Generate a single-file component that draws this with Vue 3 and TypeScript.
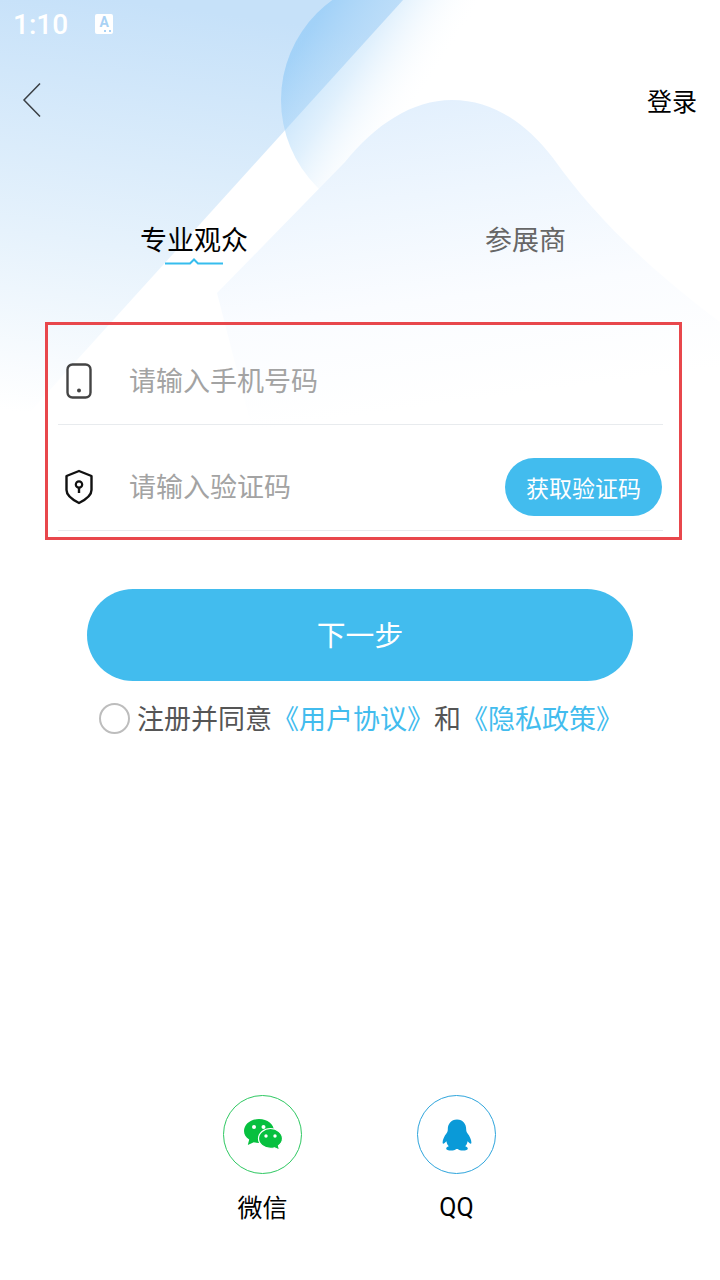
<script setup lang="ts">
import { ref } from 'vue'

const tabs = ['专业观众', '参展商']
const activeTab = ref(0)
</script>

<template>
  <div class="page">
    <svg class="page-bg" width="720" height="460" viewBox="0 0 720 460">
      <defs>
        <linearGradient id="skyFill" gradientUnits="userSpaceOnUse" x1="120" y1="0" x2="60" y2="440">
          <stop offset="0" stop-color="#c6e1f9" />
          <stop offset="0.55" stop-color="#e6f2fc" />
          <stop offset="0.95" stop-color="#ffffff" />
        </linearGradient>
        <linearGradient id="circleFill" gradientUnits="userSpaceOnUse" x1="310" y1="30" x2="420" y2="100">
          <stop offset="0" stop-color="#8cc8f7" stop-opacity="0.62" />
          <stop offset="0.45" stop-color="#a6d4f8" stop-opacity="0.34" />
          <stop offset="1" stop-color="#ffffff" stop-opacity="0" />
        </linearGradient>
        <linearGradient id="hillFill" gradientUnits="userSpaceOnUse" x1="440" y1="100" x2="480" y2="400">
          <stop offset="0" stop-color="#e3f0fd" />
          <stop offset="0.3" stop-color="#eef6fe" />
          <stop offset="0.65" stop-color="#fafcff" />
          <stop offset="1" stop-color="#ffffff" />
        </linearGradient>
      </defs>
      <polygon points="0,0 403,0 0,445" fill="url(#skyFill)" />
      <circle cx="404" cy="100" r="123" fill="url(#circleFill)" />
      <path d="M217 293 L345 162 C375 125 412 100 452 100 C492 100 525 122 553 158 C590 210 640 262 720 322 L720 460 L260 460 Z" fill="url(#hillFill)" />
    </svg>

    <div class="status-bar">
      <span class="status-time">1:10</span>
      <span class="status-badge">A</span>
    </div>

    <div class="nav-bar">
      <svg class="nav-back" width="20" height="36" viewBox="0 0 20 36">
        <path d="M18 1.5 L2 18 L18 34.5" fill="none" stroke="#3a3f44" stroke-width="1.5" />
      </svg>
      <span class="nav-login">登录</span>
    </div>

    <div class="tabs">
      <div
        v-for="(tab, i) in tabs"
        :key="tab"
        class="tab"
        :class="{ 'tab--active': activeTab === i }"
      >
        <span>{{ tab }}</span>
        <svg v-if="activeTab === i" class="tab-mark" width="58" height="8" viewBox="0 0 58 8">
          <path d="M0 6.5 H25 L29 2.5 L33 6.5 H58" fill="none" stroke="#36bdee" stroke-width="2" />
        </svg>
      </div>
    </div>

    <div class="form">
      <div class="field field--phone">
        <svg class="field-icon" width="26" height="36" viewBox="0 0 26 36">
          <rect x="1.5" y="1.5" width="23" height="33" rx="5" fill="none" stroke="#444" stroke-width="2.4" />
          <circle cx="13" cy="27.5" r="2" fill="#444" />
        </svg>
        <input class="field-input" type="text" placeholder="请输入手机号码" />
      </div>
      <div class="field field--code">
        <svg class="field-icon" width="30" height="36" viewBox="0 0 30 36">
          <path d="M15 2 L27.5 7 V21 C27.5 26 21 31 15 34 C9 31 2.5 26 2.5 21 V7 Z" fill="none" stroke="#111" stroke-width="2.4" stroke-linejoin="round" />
          <circle cx="15" cy="15.5" r="3.2" fill="none" stroke="#111" stroke-width="2.2" />
          <path d="M15 18.5 V24" stroke="#111" stroke-width="2.4" />
        </svg>
        <input class="field-input" type="text" placeholder="请输入验证码" />
        <button class="code-button" type="button">获取验证码</button>
      </div>
    </div>

    <button class="next-button" type="button">下一步</button>

    <div class="agreement">
      <span class="agreement-check"></span>
      <span class="agreement-text">注册并同意<em>《用户协议》</em>和<em>《隐私政策》</em></span>
    </div>

    <div class="social">
      <div class="social-item">
        <span class="social-circle social-circle--wechat">
          <svg width="40" height="34" viewBox="0 0 40 34">
            <path d="M16 1 C24.5 1 31 6.4 31 13 C31 19.6 24.5 25 16 25 C14 25 12.4 24.7 10.8 24.2 L4.8 27 L6.2 21.6 C2.8 19.4 1 16.4 1 13 C1 6.4 7.5 1 16 1 Z" fill="#07c03f" />
            <path d="M27.5 10.5 C34 10.5 39.5 15 39.5 20.6 C39.5 23.6 38 26 35.5 27.8 L36.5 32 L31.6 29.8 C30.4 30.2 29 30.4 27.5 30.4 C21 30.4 15.5 26 15.5 20.6 C15.5 15 21 10.5 27.5 10.5 Z" fill="#07c03f" stroke="#fff" stroke-width="1.2" />
            <circle cx="11" cy="9" r="2" fill="#fff" />
            <circle cx="20.5" cy="9" r="2" fill="#fff" />
            <circle cx="23" cy="18" r="1.7" fill="#fff" />
            <circle cx="32" cy="18" r="1.7" fill="#fff" />
          </svg>
        </span>
        <span class="social-label">微信</span>
      </div>
      <div class="social-item">
        <span class="social-circle social-circle--qq">
          <svg width="30" height="32" viewBox="0 0 30 32">
            <path d="M15 0.5 C21 0.5 24.2 5 24.2 10.5 C24.2 12 24.6 13 25.6 14.4 C27.6 17 29.4 20.6 29.4 23.4 C29.4 24.8 28.6 25 27.4 24 L25.6 22.2 C25.2 24.4 24.4 26 23.2 27.2 C25 27.8 25.8 28.6 25.8 29.6 C25.8 31 23.8 31.6 21 31.6 C18.8 31.6 17 31 15.8 30 H14.2 C13 31 11.2 31.6 9 31.6 C6.2 31.6 4.2 31 4.2 29.6 C4.2 28.6 5 27.8 6.8 27.2 C5.6 26 4.8 24.4 4.4 22.2 L2.6 24 C1.4 25 0.6 24.8 0.6 23.4 C0.6 20.6 2.4 17 4.4 14.4 C5.4 13 5.8 12 5.8 10.5 C5.8 5 9 0.5 15 0.5 Z" fill="#0a9ad8" />
          </svg>
        </span>
        <span class="social-label social-label--latin">QQ</span>
      </div>
    </div>
  </div>
</template>

<style scoped>
.page {
  background: #fff;
  color: #000;
  display: flex;
  flex-direction: column;
  font-family: "Noto Sans CJK SC", Roboto, sans-serif;
  height: 1280px;
  overflow: hidden;
  position: relative;
  width: 720px;
}

.page-bg {
  left: 0;
  position: absolute;
  top: 0;
}

.page > *:not(.page-bg) {
  position: relative;
}

.status-bar {
  align-items: center;
  display: flex;
  flex: none;
  gap: 27px;
  height: 50px;
  padding-left: 13px;
}

.status-time {
  color: #fff;
  font-family: Roboto, sans-serif;
  font-size: 28px;
  font-weight: 500;
  line-height: 50px;
}

.status-badge {
  background: #fff;
  border-radius: 2px;
  color: #a9d2f5;
  font-family: Roboto, sans-serif;
  font-size: 14px;
  font-weight: 700;
  height: 20px;
  line-height: 17px;
  margin-top: -2px;
  position: relative;
  text-align: center;
  width: 18px;
}

.status-badge::after {
  border-bottom: 2px dotted #a9d2f5;
  bottom: 2px;
  content: "";
  position: absolute;
  right: 2px;
  width: 7px;
}

.nav-bar {
  align-items: center;
  display: flex;
  flex: none;
  height: 100px;
  justify-content: space-between;
  padding: 0 23px 0 22px;
}

.nav-login {
  font-size: 25px;
  line-height: 34px;
}

.tabs {
  display: flex;
  flex: none;
  margin-top: 67px;
  padding-left: 140px;
}

.tab {
  align-items: center;
  color: #666;
  display: flex;
  flex-direction: column;
  font-size: 27px;
  line-height: 44px;
  white-space: nowrap;
  width: 108px;
}

.tab + .tab {
  margin-left: 237px;
  width: 81px;
}

.tab--active {
  color: #000;
}

.tab-mark {
  display: block;
  margin-top: -4px;
}

.form {
  background: transparent;
  border: 3px solid #e8474c;
  box-sizing: border-box;
  display: flex;
  flex: none;
  flex-direction: column;
  height: 218px;
  margin: 57px 0 0 45px;
  padding: 0 16px 0 10px;
  width: 637px;
}

.field {
  align-items: center;
  border-bottom: 1px solid #e8ebee;
  box-sizing: border-box;
  display: flex;
  flex: none;
}

.field--phone {
  height: 100px;
  padding-top: 12px;
}

.field--code {
  height: 106px;
  padding-top: 18px;
}

.field-icon {
  flex: none;
}

.field--phone .field-icon {
  margin-left: 8px;
}

.field--code .field-icon {
  margin-left: 6px;
}

.field-input {
  background: transparent;
  border: 0;
  flex: 1;
  font-family: inherit;
  font-size: 27px;
  margin-left: 37px;
  min-width: 0;
  outline: none;
  padding: 0 0 2px;
}

.field--code .field-input {
  margin-left: 35px;
}

.field-input::placeholder {
  color: #a3a3a3;
  opacity: 1;
}

.code-button {
  background: #42bcee;
  border: 0;
  border-radius: 29px;
  color: #fff;
  flex: none;
  font-family: inherit;
  font-size: 23px;
  height: 58px;
  margin-right: 1px;
  padding: 0;
  width: 157px;
}

.next-button {
  align-self: center;
  background: #42bcee;
  border: 0;
  border-radius: 46px;
  color: #fff;
  flex: none;
  font-family: inherit;
  font-size: 28.8px;
  height: 92px;
  margin-top: 49px;
  padding: 0 0 3px;
  width: 546px;
}

.agreement {
  align-items: center;
  color: #555;
  display: flex;
  flex: none;
  font-size: 27px;
  gap: 7px;
  height: 40px;
  margin-top: 17px;
  padding-left: 99px;
}

.agreement-text {
  padding-bottom: 2px;
}

.agreement em {
  color: #42bcee;
  font-style: normal;
}

.agreement-check {
  border: 2px solid #bdbdbd;
  border-radius: 50%;
  box-sizing: border-box;
  flex: none;
  height: 31px;
  width: 31px;
}

.social {
  display: flex;
  flex: none;
  gap: 115px;
  margin-top: 357px;
  padding-left: 223px;
}

.social-item {
  align-items: center;
  display: flex;
  flex-direction: column;
  gap: 15px;
  width: 79px;
}

.social-circle {
  align-items: center;
  border: 1px solid;
  border-radius: 50%;
  box-sizing: border-box;
  display: flex;
  height: 79px;
  justify-content: center;
  width: 79px;
}

.social-circle--wechat {
  border-color: #2fc862;
}

.social-circle--qq {
  border-color: #2fa5dc;
}

.social-label {
  font-size: 25px;
  line-height: 34px;
}

.social-label--latin {
  font-family: Roboto, sans-serif;
  padding-top: 2px;
}
</style>
